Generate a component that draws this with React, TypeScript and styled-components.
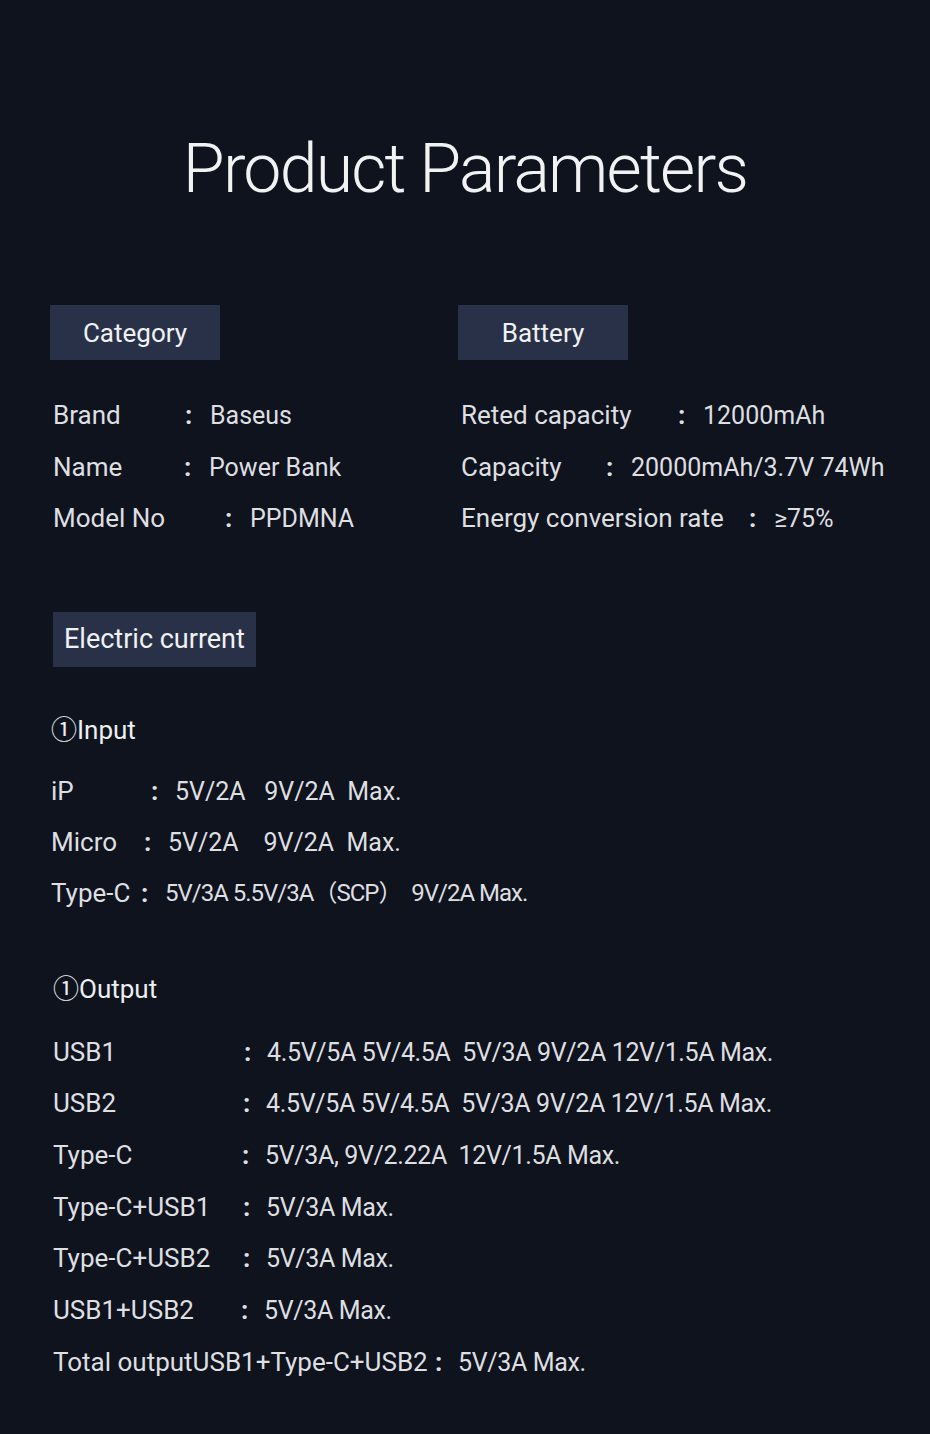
import React from 'react'
import styled, { createGlobalStyle } from 'styled-components'

type Spec = {
  label: string
  value: string
  lw: number
}

const category: Spec[] = [
  { label: 'Brand', value: 'Baseus', lw: 132 },
  { label: 'Name', value: 'Power Bank', lw: 131 },
  { label: 'Model No', value: 'PPDMNA', lw: 172 },
]

const battery: Spec[] = [
  { label: 'Reted capacity', value: '12000mAh', lw: 217 },
  { label: 'Capacity', value: '20000mAh/3.7V 74Wh', lw: 145 },
  { label: 'Energy conversion rate', value: '≥75%', lw: 288 },
]

const input: Spec[] = [
  { label: 'iP', value: '5V/2A   9V/2A  Max.', lw: 100 },
  { label: 'Micro', value: '5V/2A    9V/2A  Max.', lw: 93 },
  { label: 'Type-C', value: '5V/3A 5.5V/3A（SCP）  9V/2A Max.', lw: 90 },
]

const output: Spec[] = [
  { label: 'USB1', value: '4.5V/5A 5V/4.5A  5V/3A 9V/2A 12V/1.5A Max.', lw: 191 },
  { label: 'USB2', value: '4.5V/5A 5V/4.5A  5V/3A 9V/2A 12V/1.5A Max.', lw: 190 },
  { label: 'Type-C', value: '5V/3A, 9V/2.22A  12V/1.5A Max.', lw: 189 },
  { label: 'Type-C+USB1', value: '5V/3A Max.', lw: 190 },
  { label: 'Type-C+USB2', value: '5V/3A Max.', lw: 190 },
  { label: 'USB1+USB2', value: '5V/3A Max.', lw: 188 },
  { label: 'Total outputUSB1+Type-C+USB2', value: '5V/3A Max.', lw: 382 },
]

export default function App() {
  return (
    <>
      <GlobalStyle />
      <Page>
        <Title>Product Parameters</Title>
        <Content>
          <TopGrid>
            <Column>
              <Tag $width={170}>Category</Tag>
              <SpecList>
                {category.map((s) => (
                  <Row key={s.label} $lh={51.5}>
                    <Label $w={s.lw}>{s.label}</Label>
                    <Colon $w={25}>:</Colon>
                    <Value>{s.value}</Value>
                  </Row>
                ))}
              </SpecList>
            </Column>
            <Column>
              <Tag $width={170}>Battery</Tag>
              <SpecList>
                {battery.map((s) => (
                  <Row key={s.label} $lh={51.5}>
                    <Label $w={s.lw}>{s.label}</Label>
                    <Colon $w={25}>:</Colon>
                    <Value>{s.value}</Value>
                  </Row>
                ))}
              </SpecList>
            </Column>
          </TopGrid>

          <Electric>
            <Tag>Electric current</Tag>
          </Electric>

          <Block $indent={1} $top={37}>
            <SubHeading $after={10}>①Input</SubHeading>
            {input.map((s) => (
              <Row key={s.label} $lh={51}>
                <Label $w={s.lw}>{s.label}</Label>
                <Colon $w={24}>:</Colon>
                <Value $squeeze={s.label === 'Type-C'}>{s.value}</Value>
              </Row>
            ))}
          </Block>

          <Block $indent={3} $top={44}>
            <SubHeading $after={12}>①Output</SubHeading>
            {output.map((s) => (
              <Row key={s.label} $lh={51.7}>
                <Label $w={s.lw}>{s.label}</Label>
                <Colon $w={23}>:</Colon>
                <Value $tight>{s.value}</Value>
              </Row>
            ))}
          </Block>
        </Content>
      </Page>
    </>
  )
}

const GlobalStyle = createGlobalStyle`
  body {
    margin: 0;
    background: #0f131e;
  }
`

const Page = styled.div`
  box-sizing: border-box;
  min-height: 1434px;
  padding-top: 129px;
  padding-bottom: 40px;
  background: #0f131e;
  color: #dedfe1;
  font-family: Roboto, 'Noto Sans CJK SC', sans-serif;
  font-size: 26px;
`

const Title = styled.h1`
  margin: 0;
  height: 80px;
  line-height: 80px;
  text-align: center;
  font-size: 68px;
  font-weight: 300;
  letter-spacing: -1.8px;
  color: #f1f2f3;
`

const Content = styled.div`
  margin-top: 96px;
  padding-left: 50px;
`

const TopGrid = styled.div`
  display: grid;
  grid-template-columns: 408px 1fr;
`

const Column = styled.div`
  display: flex;
  flex-direction: column;
  align-items: flex-start;
`

const Tag = styled.div<{ $width?: number }>`
  box-sizing: border-box;
  display: flex;
  align-items: center;
  justify-content: center;
  height: 55px;
  width: ${(p) => (p.$width ? `${p.$width}px` : 'auto')};
  padding: ${(p) => (p.$width ? '0' : '0 11px')};
  background: #293148;
  color: #f0f1f3;
  font-size: ${(p) => (p.$width ? '26px' : '27px')};
`

const SpecList = styled.div`
  margin-top: 30px;
  padding-left: 3px;
`

const Electric = styled.div`
  display: flex;
  margin-top: 67px;
  padding-left: 3px;
`

const Block = styled.div<{ $indent: number; $top: number }>`
  margin-top: ${(p) => p.$top}px;
  padding-left: ${(p) => p.$indent}px;
`

const SubHeading = styled.div<{ $after: number }>`
  height: 52px;
  line-height: 52px;
  margin-bottom: ${(p) => p.$after}px;
  font-size: 26px;
  color: #eceef0;
`

const Row = styled.div<{ $lh: number }>`
  display: flex;
  height: ${(p) => p.$lh}px;
  line-height: ${(p) => p.$lh}px;
  white-space: pre;
`

const Label = styled.span<{ $w: number }>`
  flex-shrink: 0;
  width: ${(p) => p.$w}px;
`

const Colon = styled.span<{ $w: number }>`
  flex-shrink: 0;
  width: ${(p) => p.$w}px;
  font-weight: 700;
`

const Value = styled.span<{ $squeeze?: boolean; $tight?: boolean }>`
  font-size: ${(p) => (p.$squeeze ? '24px' : '25px')};
  letter-spacing: ${(p) => (p.$squeeze ? '-1px' : p.$tight ? '-0.35px' : '0')};
`
